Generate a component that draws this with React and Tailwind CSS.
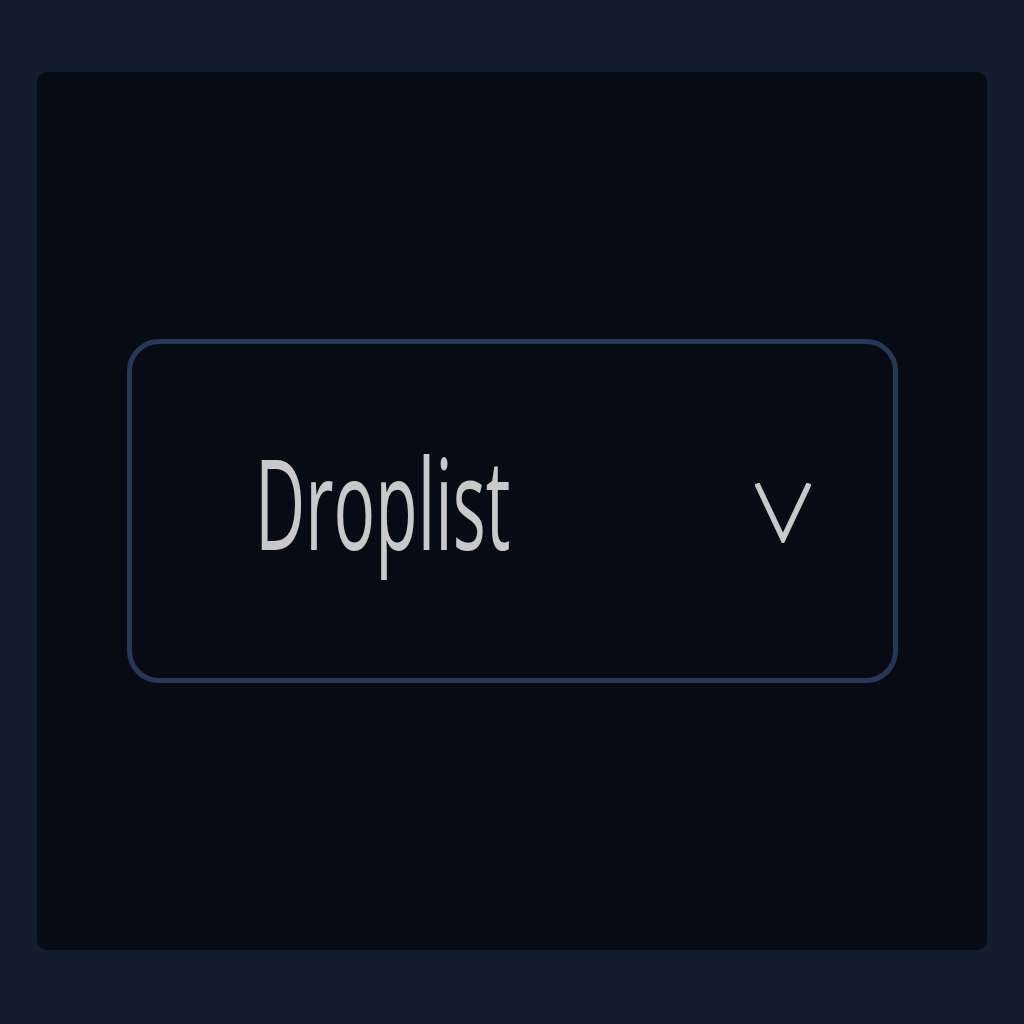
import React from 'react';

const Chevron = () => (
  <svg width="56" height="60" viewBox="0 0 56 60" fill="none" className="text-[#c9c9c9]">
    <polyline points="3,3 28,56 53,3" stroke="currentColor" strokeWidth="5.5" strokeLinecap="square" strokeLinejoin="miter" />
  </svg>
);

const App = () => {
  return (
    <div className="w-[1024px] h-[1024px] bg-[#141c2f] px-[37px] pt-[72px] pb-[74px] flex">
      <div className="flex-1 bg-[#070b14] rounded-[10px] flex items-center justify-center">
        <button className="w-[771px] h-[344px] rounded-[32px] border-[5px] border-[#263757] bg-[#070b14] flex items-center pl-[123px] pr-[82px]">
          <span
            className="block origin-left scale-x-[0.55] -translate-y-[10px] text-[126px] font-medium leading-none text-[#c9c9c9] whitespace-nowrap"
            style={{ fontFamily: '"Open Sans", "Noto Sans", sans-serif' }}
          >
            Droplist
          </span>
          <span className="ml-auto translate-y-[2px]">
            <Chevron />
          </span>
        </button>
      </div>
    </div>
  );
};

export default App;
